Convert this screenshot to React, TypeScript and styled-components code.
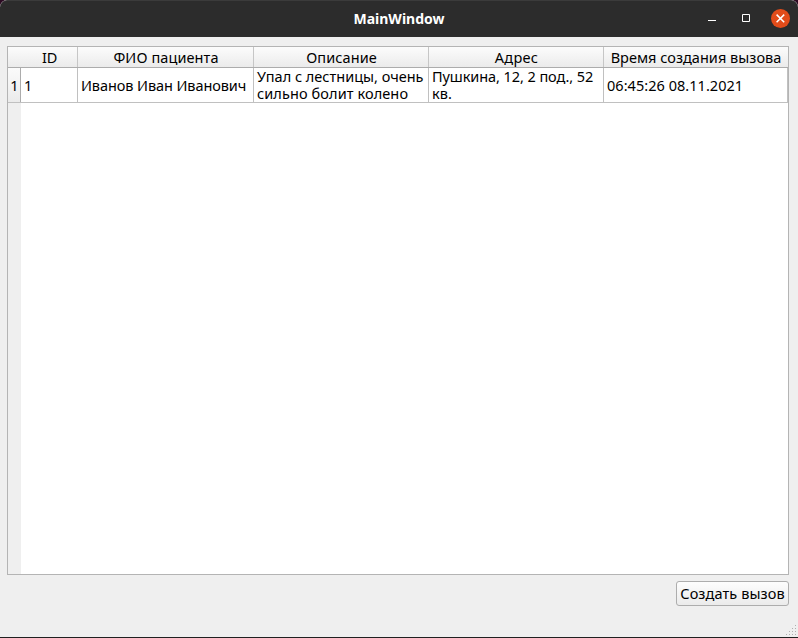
import React from "react";
import styled, { createGlobalStyle } from "styled-components";

const GlobalStyle = createGlobalStyle`
  * { box-sizing: border-box; }
  html, body, #root { height: 100%; }
  body { margin: 0; overflow: hidden; background: #2c0a22; }
`;

const Window = styled.div`
  height: 100vh;
  display: flex;
  flex-direction: column;
  overflow: hidden;
  border-radius: 7px 7px 0 0;
  border-bottom: 1px solid #202020;
  background: #efefef;
  color: #000;
  font: 14.5px/17px "Noto Sans", "Open Sans", sans-serif;
`;

const TitleBar = styled.header`
  flex: 0 0 37px;
  display: grid;
  grid-template-columns: 1fr auto 1fr;
  align-items: center;
  padding: 0 8px;
  background: #2c2c2c;
  border-top: 1px solid #3b3b3b;
  border-radius: 7px 7px 0 0;
`;

const Title = styled.h1`
  grid-column: 2;
  margin: 0;
  color: #fff;
  font-size: 14px;
  line-height: 20px;
  font-weight: 700;
`;

const WindowControls = styled.div`
  justify-self: end;
  display: flex;
  align-items: center;
  gap: 15px;
  padding-bottom: 2px;
`;

const Control = styled.button<{ $close?: boolean }>`
  width: 19px;
  height: 19px;
  padding: 0;
  border: 0;
  border-radius: 50%;
  background: ${(p) => (p.$close ? "#e24c1a" : "transparent")};

  svg { display: block; }
`;

const Content = styled.main`
  flex: 1;
  min-height: 0;
  display: flex;
  flex-direction: column;
  align-items: flex-end;
  gap: 6px;
  padding: 9px 9px 0 7px;
`;

const TableView = styled.section`
  width: 782px;
  height: 529px;
  display: flex;
  flex-direction: column;
  border: 1px solid #b4b4b4;
  background: linear-gradient(to right, #efefef 13px, #fff 13px);
`;

const columns = "13px 57px 176px 175px 175px 184px";

const HeaderRow = styled.div`
  flex: 0 0 21px;
  display: grid;
  grid-template-columns: ${columns};
  border-bottom: 1px solid #acacac;
  background: linear-gradient(#fcfcfc, #ebebeb);
`;

const HeaderCell = styled.div<{ $divider?: boolean }>`
  display: flex;
  align-items: center;
  justify-content: center;
  padding: 1px 0 0 1px;
  white-space: nowrap;
  border-right: 1px solid ${(p) => (p.$divider ? "#c6c6c6" : "transparent")};
`;

const DataRow = styled.div`
  flex: 0 0 35px;
  display: grid;
  grid-template-columns: ${columns};
  background: #fff;
  border-bottom: 1px solid #c0c0c0;
`;

const RowNumber = styled.div`
  display: flex;
  align-items: center;
  justify-content: center;
  padding-left: 1px;
  border-right: 1px solid #acacac;
  background: linear-gradient(#fbfbfb, #ebebeb);
`;

const Cell = styled.div`
  display: flex;
  flex-direction: column;
  justify-content: center;
  padding-left: 3px;
  white-space: nowrap;
  border-right: 1px solid #c0c0c0;
`;

const Label = styled.span<{ $tracking?: number }>`
  letter-spacing: ${(p) => p.$tracking ?? 0}px;
`;

const PushButton = styled.button`
  width: 113px;
  height: 25px;
  padding: 0 0 1px;
  border: 1px solid #adadad;
  border-radius: 3px;
  background: linear-gradient(#fdfdfd, #ebebeb);
  color: #000;
  font: inherit;
  white-space: nowrap;
`;

const StatusBar = styled.footer`
  margin-top: auto;
  margin-right: -7px;
  height: 12px;

  svg { display: block; }
`;

type Text = { text: string; tracking?: number };

const headers: Text[] = [
  { text: "ID", tracking: -0.2 },
  { text: "ФИО пациента", tracking: 0.1 },
  { text: "Описание", tracking: 0.1 },
  { text: "Адрес", tracking: 0.3 },
  { text: "Время создания вызова", tracking: 0.02 },
];

const call: Text[][] = [
  [{ text: "1" }],
  [{ text: "Иванов Иван Иванович", tracking: -0.09 }],
  [
    { text: "Упал с лестницы, очень" },
    { text: "сильно болит колено", tracking: 0.1 },
  ],
  [{ text: "Пушкина, 12, 2 под., 52", tracking: -0.08 }, { text: "кв." }],
  [{ text: "06:45:26 08.11.2021", tracking: 0.04 }],
];

const gripDots = [
  [9, 0], [6, 3], [9, 3], [3, 6], [6, 6], [9, 6], [0, 9], [3, 9], [6, 9], [9, 9],
];

export default function App() {
  return (
    <>
      <GlobalStyle />
      <Window>
        <TitleBar>
          <Title>MainWindow</Title>
          <WindowControls>
            <Control aria-label="Minimize">
              <svg width="19" height="19"><path d="M5 11h8v1H5z" fill="#fff" /></svg>
            </Control>
            <Control aria-label="Maximize">
              <svg width="19" height="19"><path d="M5.5 5.5h7v7h-7z" fill="none" stroke="#fff" /></svg>
            </Control>
            <Control $close aria-label="Close">
              <svg width="19" height="19"><path d="M5.6 5.6l7.6 7.6M13.2 5.6l-7.6 7.6" stroke="#fff" strokeWidth="1.5" /></svg>
            </Control>
          </WindowControls>
        </TitleBar>
        <Content>
          <TableView>
            <HeaderRow>
              <HeaderCell />
              {headers.map((h, i) => (
                <HeaderCell key={h.text} $divider={i < headers.length - 1}>
                  <Label $tracking={h.tracking}>{h.text}</Label>
                </HeaderCell>
              ))}
            </HeaderRow>
            <DataRow>
              <RowNumber>1</RowNumber>
              {call.map((lines, i) => (
                <Cell key={i}>
                  {lines.map((l) => (
                    <Label key={l.text} $tracking={l.tracking}>{l.text}</Label>
                  ))}
                </Cell>
              ))}
            </DataRow>
          </TableView>
          <PushButton><Label $tracking={0.1}>Создать вызов</Label></PushButton>
          <StatusBar>
            <svg width="10" height="10">
              {gripDots.map(([x, y]) => (
                <rect key={`${x}-${y}`} x={x} y={y} width="1" height="1" fill="#b0b0b0" />
              ))}
            </svg>
          </StatusBar>
        </Content>
      </Window>
    </>
  );
}
